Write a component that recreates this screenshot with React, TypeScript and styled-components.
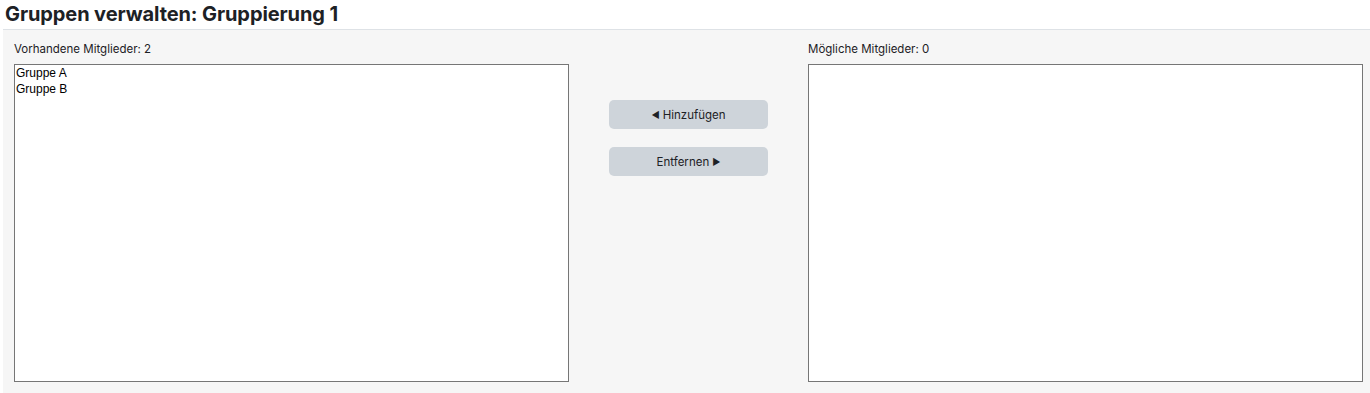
import * as React from "react";
import styled, { createGlobalStyle } from "styled-components";

const GlobalStyle = createGlobalStyle`
  html, body {
    margin: 0;
    padding: 0;
    background: #fff;
    font-family: Inter, "Noto Sans", sans-serif;
    color: #1d2125;
  }
`;

const Page = styled.div`
  width: 1370px;
  height: 393px;
  overflow: hidden;
`;

const Title = styled.h2`
  margin: 0;
  padding: 2px 0 0 5px;
  height: 27px;
  font-size: 20px;
  font-weight: 700;
  line-height: 24px;
  letter-spacing: -0.1px;
  color: #1d2125;
`;

const Panel = styled.div`
  margin-left: 3px;
  height: 364px;
  box-sizing: border-box;
  border-top: 1px solid #dee2e6;
  background: #f6f6f6;
  padding: 12px 7px 0 11px;
  display: grid;
  grid-template-columns: 555px 1fr 555px;
`;

const Column = styled.div`
  display: flex;
  flex-direction: column;
`;

const Label = styled.label`
  font-size: 11.5px;
  line-height: 14px;
  color: #1d2125;
  margin-bottom: 8px;
`;

const ListBox = styled.select`
  width: 555px;
  height: 318px;
  box-sizing: border-box;
  margin: 0;
  padding: 0 1px;
  border: 1px solid #767676;
  border-radius: 0;
  background: #fff;
  font-family: "Liberation Sans", Arial, sans-serif;
  font-size: 12px;
  color: #000;
  outline: none;

  option {
    padding: 1px 0;
  }
`;

const Actions = styled.div`
  display: flex;
  flex-direction: column;
  align-items: center;
  gap: 18px;
  padding-top: 58px;
`;

const ActionButton = styled.button`
  width: 159px;
  height: 29px;
  border: none;
  border-radius: 5px;
  background: #ced4da;
  color: #1d2125;
  font-family: Inter, "Noto Sans", sans-serif;
  font-size: 11.5px;
  cursor: pointer;
  display: flex;
  align-items: center;
  justify-content: center;
  gap: 3px;
`;

const Arrow = styled.span`
  font-size: 9px;
`;

export default function App() {
  return (
    <Page>
      <GlobalStyle />
      <Title>Gruppen verwalten: Gruppierung 1</Title>
      <Panel>
        <Column>
          <Label>Vorhandene Mitglieder: 2</Label>
          <ListBox multiple size={20}>
            <option>Gruppe A</option>
            <option>Gruppe B</option>
          </ListBox>
        </Column>
        <Actions>
          <ActionButton>
            <Arrow>◀</Arrow>Hinzufügen
          </ActionButton>
          <ActionButton>
            Entfernen<Arrow>▶</Arrow>
          </ActionButton>
        </Actions>
        <Column>
          <Label>Mögliche Mitglieder: 0</Label>
          <ListBox multiple size={20} />
        </Column>
      </Panel>
    </Page>
  );
}
